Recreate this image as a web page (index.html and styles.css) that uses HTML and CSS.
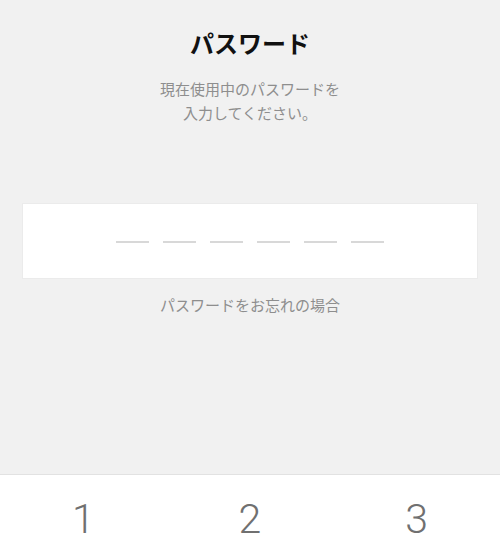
FILE: index.html
```html
<!DOCTYPE html>
<html lang="ja">
<head>
<meta charset="utf-8">
<link rel="stylesheet" href="styles.css">
</head>
<body>
<div class="screen">
  <div class="top">
    <h1 class="title">パスワード</h1>
    <p class="subtitle">現在使用中のパスワードを<br>入力してください。</p>
    <div class="code-box">
      <div class="dashes">
        <span class="dash"></span><span class="dash"></span><span class="dash"></span><span class="dash"></span><span class="dash"></span><span class="dash"></span>
      </div>
    </div>
    <p class="forgot">パスワードをお忘れの場合</p>
  </div>
  <div class="keypad">
    <div class="key">1</div>
    <div class="key">2</div>
    <div class="key">3</div>
  </div>
</div>
</body>
</html>
```
FILE: styles.css
```css
html, body {
  margin: 0;
  padding: 0;
  background: #f1f1f1;
  font-family: "Noto Sans CJK JP", "Noto Sans", sans-serif;
}
.screen {
  width: 500px;
  height: 553px;
  display: flex;
  flex-direction: column;
  overflow: hidden;
}
.top {
  flex: 1;
  display: flex;
  flex-direction: column;
  align-items: stretch;
  padding-top: 28px;
}
.title {
  margin: 0;
  font-size: 24px;
  line-height: 30px;
  font-weight: 700;
  color: #111;
  text-align: center;
}
.subtitle {
  margin: 19px 0 0;
  font-size: 15px;
  line-height: 24px;
  color: #8e8e8e;
  text-align: center;
}
.code-box {
  margin: 78px 22px 0;
  height: 74px;
  background: #fff;
  border: 1px solid #ebebeb;
  display: flex;
  align-items: center;
  justify-content: center;
}
.dashes {
  display: flex;
  gap: 14px;
  margin-top: 1px;
}
.dash {
  width: 33px;
  height: 2px;
  background: #d8d8d8;
}
.forgot {
  margin: 14px 0 0;
  font-size: 15px;
  line-height: 24px;
  color: #8e8e8e;
  text-align: center;
}
.keypad {
  height: 78px;
  background: #fff;
  border-top: 1px solid #e2e2e2;
  display: grid;
  grid-template-columns: repeat(3, 1fr);
}
.key {
  text-align: center;
  font-family: Roboto, "Liberation Sans", sans-serif;
  font-weight: 300;
  font-size: 41px;
  line-height: 88px;
  color: #707070;
}
```
